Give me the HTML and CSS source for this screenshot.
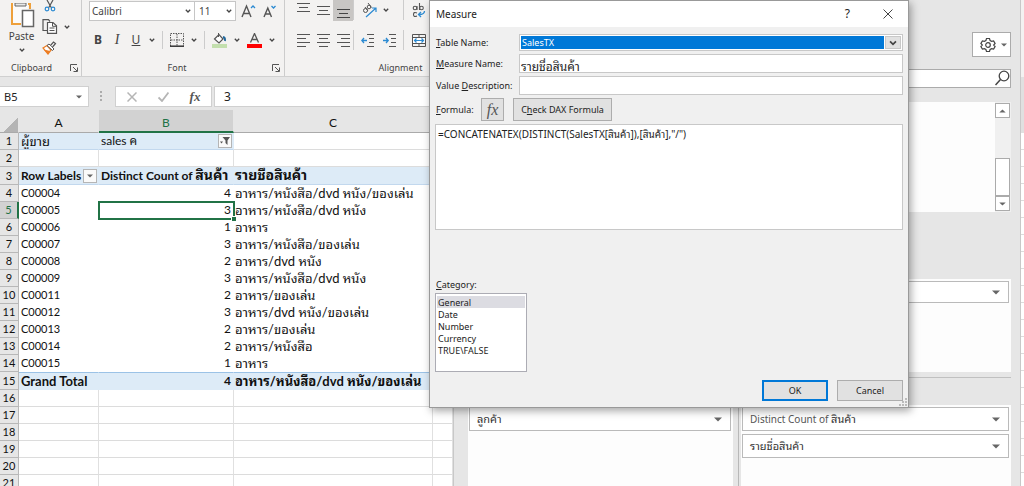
FILE: index.html
```html
<!DOCTYPE html>
<html lang="th">
<head>
<meta charset="utf-8">
<title>Measure</title>
<link rel="stylesheet" href="styles.css">
</head>
<body>
<svg class="defs" aria-hidden="true">
  <symbol id="chev" viewBox="0 0 6 6"><path d="M.8 1.800 3 4 5.200 1.800" fill="none" stroke="#444" stroke-width="1.300"/></symbol>
  <symbol id="tri" viewBox="0 0 8 5"><path d="M0 .5h8L4 4.500z" fill="#666"/></symbol>
  <symbol id="launch" viewBox="0 0 8 8"><path d="M.5 7V.5H7M3 3l4 4M7.500 3.500v4h-4" fill="none" stroke="#555"/></symbol>
</svg>
<div class="app">
  <main class="workbook">
    <div class="ribbon">
      <section class="group clipboard">
        <div class="tools">
          <button class="paste">
            <svg width="26" height="25" viewBox="0 0 26 25"><path d="M3 0v21h9M18 1h3v5" fill="none" stroke="#eea03b" stroke-width="2"/><path d="M4 0h15v7h-7v13H4z" fill="#fbfbfb"/><path d="M6 0h11v3H6z" fill="#e8e8e8" stroke="#666"/><path d="M13.500 7.500h11v16h-11z" fill="#fff" stroke="#666" stroke-width="1.500"/></svg>
            <span>Paste</span>
            <svg width="6" height="6"><use href="#chev"/></svg>
          </button>
          <div class="clips">
            <button aria-label="Cut"><svg width="12" height="12" viewBox="0 0 12 12"><path d="M3 0l4.500 8M9 0 4.500 8" fill="none" stroke="#555" stroke-width="1.200"/><circle cx="3" cy="9" r="1.800" fill="none" stroke="#2b8ad2" stroke-width="1.200"/><circle cx="9" cy="9" r="1.800" fill="none" stroke="#2b8ad2" stroke-width="1.200"/></svg></button>
            <button aria-label="Copy"><svg width="16" height="15" viewBox="0 0 16 15"><path d="M5 11.500H1V.700h5.500L8 2.500" fill="none" stroke="#555" stroke-width="1.200"/><path d="M5.500 3.500h5.500l3.500 3.300v7.500h-9z" fill="#fff" stroke="#555" stroke-width="1.200"/><path d="M10.500 3.500v3.800h4M7.500 9h5M7.500 11.500h5" fill="none" stroke="#555"/></svg><svg width="6" height="6"><use href="#chev"/></svg></button>
            <button aria-label="Format Painter"><svg width="15" height="14" viewBox="0 0 15 14"><path d="M1 7l4-2.500 4 4.500-3 4z" fill="#fff" stroke="#ed7d22" stroke-width="1.300"/><path d="M2 9l4 4 2-3-4-1z" fill="#ed7d22"/><path d="M5 4.500l2-1.500 5 5-1.500 1.500z" fill="#fff" stroke="#555"/><path d="M8.500 4.500l3-3.500 2 1.500-3 3.500" fill="#fff" stroke="#555" stroke-width="1.200"/></svg></button>
          </div>
        </div>
        <div class="caption"><span>Clipboard</span><svg width="8" height="8"><use href="#launch"/></svg></div>
      </section>
      <section class="group font">
        <div class="line">
          <span class="combo name"><select aria-label="Font"><option>Calibri</option></select><svg width="6" height="6"><use href="#chev"/></svg></span>
          <span class="combo size"><select aria-label="Font size"><option>11</option></select><svg width="6" height="6"><use href="#chev"/></svg></span>
          <button class="grow" aria-label="Increase font size"><svg width="15" height="14" viewBox="0 0 15 14"><path d="M1 13 5.500 2 10 13M2.500 9.500h6" fill="none" stroke="#555" stroke-width="1.400"/><path d="M10 4l2-2 2 2" fill="none" stroke="#2b8ad2" stroke-width="1.300"/></svg></button>
          <button aria-label="Decrease font size"><svg width="14" height="14" viewBox="0 0 14 14"><path d="M1 13 4.800 4 8.500 13M2.300 10h5" fill="none" stroke="#555" stroke-width="1.400"/><path d="M8.500 2l2 2 2-2" fill="none" stroke="#2b8ad2" stroke-width="1.300"/></svg></button>
        </div>
        <div class="line styles">
          <button class="b">B</button><button class="i">I</button><button class="u">U</button><svg width="6" height="6"><use href="#chev"/></svg>
          <i class="bar"></i>
          <button aria-label="Borders"><svg width="14" height="14" viewBox="0 0 14 14"><path d="M.5 13V.5h13V13M7 1v12M1 7h12" fill="none" stroke="#555" stroke-dasharray="1.500 1"/><path d="M0 13.200h14" stroke="#333" stroke-width="1.500"/></svg></button><svg width="6" height="6"><use href="#chev"/></svg>
          <i class="bar"></i>
          <button aria-label="Fill colour"><svg width="15" height="15" viewBox="0 0 15 15"><path d="M2.500 6 7 1.500l4 4.500-4 4z" fill="#fff" stroke="#555" stroke-width="1.200"/><path d="M6.500 0v4" stroke="#555"/><path d="M11 4q2.500.5 2 4" fill="none" stroke="#22689c" stroke-width="1.800"/><path d="M0 11h15v4H0z" fill="#c3dfae"/></svg></button><svg width="6" height="6"><use href="#chev"/></svg>
          <button aria-label="Font colour"><svg width="15" height="15" viewBox="0 0 15 15"><path d="M3.500 9.500 7.500.5l4 9M5 6.500h5" fill="none" stroke="#555" stroke-width="1.300"/><path d="M0 11h15v4H0z" fill="#f00"/></svg></button><svg width="6" height="6"><use href="#chev"/></svg>
        </div>
        <div class="caption"><span>Font</span><svg width="8" height="8"><use href="#launch"/></svg></div>
      </section>
      <section class="group align">
        <div class="cells">
          <button aria-label="Top align"><svg width="13" height="14" viewBox="0 0 13 14"><path d="M0 .5h13M2 4.500h9M0 8.500h13" stroke="#555"/></svg></button>
          <button aria-label="Middle align"><svg width="13" height="14" viewBox="0 0 13 14"><path d="M0 3.500h13M2 7.500h9M0 11.500h13" stroke="#555"/></svg></button>
          <button class="on" aria-label="Bottom align"><svg width="13" height="14" viewBox="0 0 13 14"><path d="M0 5.500h13M2 9.500h9M0 13.500h13" stroke="#444"/></svg></button>
          <button class="wide split" aria-label="Orientation"><svg width="16" height="15" viewBox="0 0 16 15"><g fill="none" stroke="#555"><circle cx="3.500" cy="7.500" r="2"/><path d="M3 4l3 4"/><circle cx="7" cy="4" r="1.800"/><path d="M6 0l3.500 4.500"/></g><path d="M4 14 14 5M10 5h4v4" fill="none" stroke="#2b8ad2" stroke-width="1.200"/></svg><svg width="6" height="6"><use href="#chev"/></svg></button>
          <button class="edge" aria-label="Wrap text"><svg width="14" height="15" viewBox="0 0 14 15"><g fill="none" stroke="#555" stroke-width="1.100"><circle cx="3" cy="5" r="1.800"/><path d="M5 3v4M7.500 0v7"/><circle cx="9.500" cy="5" r="1.800"/><path d="M5 10q-3.500-1.500-3.500 1.500T5 13"/></g><path d="M12.500 8q0 3.500-5.500 3.500M9 9l-2.500 2.500L9 14" fill="none" stroke="#2b8ad2" stroke-width="1.300"/></svg></button>
          <button aria-label="Align left"><svg width="13" height="13" viewBox="0 0 13 13"><path d="M0 .5h13M0 4.500h9M0 8.500h13M0 12.500h9" stroke="#555"/></svg></button>
          <button aria-label="Center"><svg width="13" height="13" viewBox="0 0 13 13"><path d="M0 .5h13M2 4.500h9M0 8.500h13M2 12.500h9" stroke="#555"/></svg></button>
          <button aria-label="Align right"><svg width="13" height="13" viewBox="0 0 13 13"><path d="M0 .5h13M4 4.500h9M0 8.500h13M4 12.500h9" stroke="#555"/></svg></button>
          <button class="split" aria-label="Decrease indent"><svg width="13" height="13" viewBox="0 0 13 13"><path d="M6 .5h7M8 4.500h5M8 8.500h5M6 12.500h7" stroke="#555"/><path d="M6 6.500H1M3 4 .8 6.500 3 9" fill="none" stroke="#2b8ad2" stroke-width="1.300"/></svg></button>
          <button class="indent" aria-label="Increase indent"><svg width="13" height="13" viewBox="0 0 13 13"><path d="M6 .5h7M8 4.500h5M8 8.500h5M6 12.500h7" stroke="#555"/><path d="M0 6.500h5M3 4l2.200 2.500L3 9" fill="none" stroke="#2b8ad2" stroke-width="1.300"/></svg></button>
          <button class="edge" aria-label="Merge"><svg width="14" height="13" viewBox="0 0 14 13"><path d="M.5.5h13v12H.5zM0 3.500h14M0 9.500h14M7 0v3.500M7 9.500V13" fill="none" stroke="#555"/><path d="M1 4h12v5H1z" fill="#fff"/><path d="M2.500 6.500h9M4.500 4.500l-2 2 2 2M9.500 4.500l2 2-2 2" fill="none" stroke="#2b8ad2" stroke-width="1.200"/></svg></button>
        </div>
        <div class="caption"><span>Alignment</span></div>
      </section>
    </div>
    <div class="formulabar">
      <label class="namebox"><input aria-label="Name box" value="B5"><svg width="6" height="4"><use href="#tri"/></svg></label>
      <svg class="grip" width="3" height="12" viewBox="0 0 3 12"><path d="M1 1v2M1 5v2M1 9v2" stroke="#999" stroke-width="1.500"/></svg>
      <div class="entry">
        <button aria-label="Cancel entry"><svg width="10" height="10" viewBox="0 0 10 10"><path d="M.5.5l9 9M9.500.5l-9 9" stroke="#b5b5b5" stroke-width="1.500"/></svg></button>
        <button aria-label="Enter"><svg width="11" height="10" viewBox="0 0 11 10"><path d="M.5 5.500 4 9l6.500-8.500" fill="none" stroke="#b5b5b5" stroke-width="1.800"/></svg></button>
        <button class="fx">fx</button>
      </div>
      <input class="content" aria-label="Formula bar" value="3">
    </div>
    <table class="sheet">
      <colgroup><col class="c0"><col class="ca"><col class="cb"><col class="cc"><col></colgroup>
      <thead><tr><th class="corner"></th><th>A</th><th class="sel">B</th><th>C</th><th></th></tr></thead>
      <tbody>
        <tr><th>1</th><td class="blue"><span class="seller">ผู้ขาย</span></td><td class="blue"><div class="with">sales ค<button class="drop" aria-label="Filter sales"><svg width="10" height="8" viewBox="0 0 10 8"><path d="M2.500 0H10L7.500 3.500V8L5.500 6V3.500z" fill="#555"/><path d="M0 4.500h3L1.500 6.500z" fill="#555"/></svg></button></div></td><td></td><td></td></tr>
        <tr><th>2</th><td></td><td></td><td></td><td></td></tr>
        <tr class="head"><th>3</th><td><div class="with">Row Labels<button class="drop" aria-label="Filter rows"><svg width="6" height="4"><use href="#tri"/></svg></button></div></td><td>Distinct Count of <span class="thai">สินค้า</span></td><td><span class="thai">รายชื่อสินค้า</span></td><td></td></tr>
        <tr class="data"><th>4</th><td>C00004</td><td>4</td><td>อาหาร/หนังสือ/dvd หนัง/ของเล่น</td><td></td></tr>
        <tr class="data"><th class="sel">5</th><td>C00005</td><td class="active">3</td><td>อาหาร/หนังสือ/dvd หนัง</td><td></td></tr>
        <tr class="data"><th>6</th><td>C00006</td><td>1</td><td>อาหาร</td><td></td></tr>
        <tr class="data"><th>7</th><td>C00007</td><td>3</td><td>อาหาร/หนังสือ/ของเล่น</td><td></td></tr>
        <tr class="data"><th>8</th><td>C00008</td><td>2</td><td>อาหาร/dvd หนัง</td><td></td></tr>
        <tr class="data"><th>9</th><td>C00009</td><td>3</td><td>อาหาร/หนังสือ/dvd หนัง</td><td></td></tr>
        <tr class="data"><th>10</th><td>C00011</td><td>2</td><td>อาหาร/ของเล่น</td><td></td></tr>
        <tr class="data"><th>11</th><td>C00012</td><td>3</td><td>อาหาร/dvd หนัง/ของเล่น</td><td></td></tr>
        <tr class="data"><th>12</th><td>C00013</td><td>2</td><td>อาหาร/ของเล่น</td><td></td></tr>
        <tr class="data"><th>13</th><td>C00014</td><td>2</td><td>อาหาร/หนังสือ</td><td></td></tr>
        <tr class="data"><th>14</th><td>C00015</td><td>1</td><td>อาหาร</td><td></td></tr>
        <tr class="data total"><th>15</th><td>Grand Total</td><td>4</td><td>อาหาร/หนังสือ/dvd หนัง/ของเล่น</td><td></td></tr>
        <tr><th>16</th><td></td><td></td><td></td><td></td></tr>
        <tr><th>17</th><td></td><td></td><td></td><td></td></tr>
        <tr><th>18</th><td></td><td></td><td></td><td></td></tr>
        <tr><th>19</th><td></td><td></td><td></td><td></td></tr>
        <tr><th>20</th><td></td><td></td><td></td><td></td></tr>
        <tr><th>21</th><td></td><td></td><td></td><td></td></tr>
      </tbody>
    </table>
  </main>
  <aside class="pane">
    <button class="gear" aria-label="Tools"><svg width="16" height="16" viewBox="0 0 16 16"><path d="M6.500 1.500h3l.6 2 1.500.8 2-.4 1.500 2.600L13.700 8l1.400 1.500-1.500 2.600-2-.4-1.500.8-.6 2h-3l-.6-2-1.500-.8-2 .4L.9 9.500 2.300 8 .9 6.500l1.500-2.600 2 .4 1.500-.8z" fill="none" stroke="#444" stroke-width="1.200"/><circle cx="8" cy="8" r="2.300" fill="none" stroke="#444" stroke-width="1.200"/></svg><svg width="6" height="4"><use href="#tri"/></svg></button>
    <label class="search"><input aria-label="Search fields"><svg width="15" height="16" viewBox="0 0 15 16"><circle cx="9" cy="6" r="4.800" fill="none" stroke="#444" stroke-width="1.300"/><path d="M5.500 9.500.5 15" stroke="#444" stroke-width="1.500"/></svg></label>
    <div class="fields"><div class="scroll"><button aria-label="Scroll up"><svg class="up" width="7" height="4"><use href="#tri"/></svg></button><i class="thumb"></i><button aria-label="Scroll down"><svg width="7" height="4"><use href="#tri"/></svg></button></div></div>
    <div class="zones upper"><div class="zone"></div><div class="zone"><button class="item"><span></span><svg width="8" height="5"><use href="#tri"/></svg></button></div></div>
    <div class="zones lower"><div class="zone"><button class="item"><span class="thai">ลูกค้า</span><svg width="8" height="5"><use href="#tri"/></svg></button></div><div class="zone"><button class="item"><span>Distinct Count of <span class="thai">สินค้า</span></span><svg width="8" height="5"><use href="#tri"/></svg></button><button class="item"><span class="thai">รายชื่อสินค้า</span><svg width="8" height="5"><use href="#tri"/></svg></button></div></div>
  </aside>
  <div class="sliver"><i class="rib"></i><i class="fill"></i><i class="rows"></i></div>
</div>

<section class="dialog" role="dialog" aria-labelledby="dlg-title">
  <header><h1 id="dlg-title">Measure</h1><button aria-label="Help">?</button><button aria-label="Close"><svg width="10" height="10" viewBox="0 0 10 10"><path d="M.5.5l9 9M9.500.5l-9 9" stroke="#444"/></svg></button></header>
  <form>
    <div class="row"><label for="tbl"><u>T</u>able Name:</label><span class="picker"><select id="tbl"><option>SalesTX</option></select><span class="arrow"><svg width="8" height="8"><use href="#chev"/></svg></span></span></div>
    <div class="row"><label for="mn"><u>M</u>easure Name:</label><input id="mn" value="รายชื่อสินค้า"></div>
    <div class="row"><label for="vd">Value <u>D</u>escription:</label><input id="vd"></div>
    <div class="formula"><label for="fm"><u>F</u>ormula:</label><button type="button" class="fx">fx</button><button type="button" class="check"><span>C<u>h</u>eck DAX Formula</span></button></div>
    <textarea id="fm" spellcheck="false">=CONCATENATEX(DISTINCT(SalesTX[สินค้า]),[สินค้า],"/")</textarea>
    <label class="catlabel" for="cat"><u>C</u>ategory:</label>
    <select id="cat" size="6"><option selected>General</option><option>Date</option><option>Number</option><option>Currency</option><option>TRUE\FALSE</option></select>
    <div class="actions"><button type="button" class="ok">OK</button><button type="button">Cancel</button></div>
  </form>
  <svg class="sizer" width="8" height="8" viewBox="0 0 8 8"><path d="M6 0h2v2H6zM3 3h2v2H3zM6 3h2v2H6zM0 6h2v2H0zM3 6h2v2H3zM6 6h2v2H6z" fill="#bbb"/></svg>
</section>
</body>
</html>
```
FILE: styles.css
```css
* { box-sizing: border-box; }
body { margin: 0; height: 100vh; overflow: hidden; position: relative; background: #e6e6e6; color: #222; font: 10px/14px "Noto Sans", "Noto Sans Thai Looped", Loma, Waree, "Noto Sans Thai", sans-serif; }
button, input, select, textarea { font: inherit; color: inherit; margin: 0; padding: 0; border: 0; background: none; border-radius: 0; outline: 0; }
button { display: inline-flex; align-items: center; justify-content: center; white-space: nowrap; }
select { appearance: none; }
svg { display: block; flex: none; }
.defs { position: absolute; width: 0; height: 0; }

.app { display: grid; grid-template-columns: minmax(0, 453fr) minmax(0, 568fr) 3px; height: 100%; }
.workbook { overflow: hidden; }

.ribbon { display: flex; height: 77px; background: #f3f2f1; border-bottom: 1px solid #d0d0d0; color: #444; overflow: hidden; }
.group { display: flex; flex-direction: column; flex: none; padding-bottom: 1px; }
.group .caption { display: flex; align-items: center; justify-content: space-between; margin-top: auto; font-size: 9px; }
.caption span { flex: 1; padding-right: 7px; text-align: center; }
.clipboard { width: 82px; padding-right: 3px; border-right: 1px solid #ccc; }
.clipboard .tools { display: flex; gap: 4px; }
.paste { flex-direction: column; gap: 1px; width: 38px; padding-left: 5px; }
.paste > svg:last-child { margin-top: 3px; }
.clips { display: flex; flex-direction: column; gap: 7px; align-items: flex-start; }
.clips button { gap: 6px; }
.clips button:first-child { padding-left: 2px; }
.font { width: 203px; padding: 1px 4px 1px 7px; border-right: 1px solid #ccc; }
.line { display: flex; align-items: center; }
.combo { display: flex; align-items: center; height: 20px; padding: 0 3px 0 2px; border: 1px solid #c6c6c6; background: #fff; }
.combo select { flex: 1; min-width: 0; }
.combo.name { width: 106px; }
.combo.size { width: 41px; border-left: 0; padding-left: 4px; }
.grow { margin: 0 7px 0 5px; }
.styles { height: 20px; margin-top: 9px; justify-content: space-between; padding: 0 5px 0 3px; }
.styles button { min-width: 12px; font-size: 12px; }
.styles .b { font-weight: 700; }
.styles .i { font-family: "Liberation Serif", serif; font-style: italic; font-size: 14px; }
.styles .u { text-decoration: underline; }
.bar { width: 1px; height: 18px; background: #ccc; }
.align { flex: 1 0 170px; }
.align .cells { display: grid; grid-template-columns: repeat(3, 20px) 28px 22px 30px; row-gap: 9px; padding-left: 8px; }
.cells button { height: 20px; }
.cells .on { background: #c8c6c4; height: 21px; }
.cells .wide { grid-column: span 2; gap: 5px; justify-content: flex-start; padding-left: 8px; }
.cells .split, .cells .edge { border-left: 1px solid #ccc; }
.cells .indent { justify-content: flex-start; padding-left: 2px; }
.align .caption { padding-left: 68px; }

.formulabar { display: flex; height: 33px; padding: 9px 0 3px; }
.namebox { display: flex; align-items: center; width: 89px; padding: 0 6px 0 4px; background: #fff; border: 1px solid #d0d0d0; border-left: 0; }
.namebox input { flex: 1; min-width: 0; font-size: 11px; }
.grip { margin: 4px 12px 0 11px; }
.entry { display: flex; align-items: center; justify-content: space-around; width: 97px; margin-right: 2px; border: 1px solid #d0d0d0; background: #fff; }
.fx { font: italic 700 13px/16px "Liberation Serif", serif; color: #555; }
.content { flex: 1; min-width: 0; padding-left: 9px; border: 1px solid #d0d0d0; border-right: 0; background: #fff; font-size: 12px; }

.sheet { width: 100%; table-layout: fixed; border-collapse: separate; border-spacing: 0; background: #fff; color: #111; font: 12px/16px Lato, "Noto Sans Thai Looped", Loma, Waree, "Noto Sans Thai", sans-serif; }
.c0 { width: 19px; } .ca { width: 80px; } .cb { width: 135px; } .cc { width: 199px; }
.sheet th, .sheet td { height: 17px; padding: 0 2px; border-right: 1px solid #e0e0e0; border-bottom: 1px solid #dcdcdc; overflow: hidden; white-space: nowrap; }
.sheet td { text-align: left; line-height: 14px; }
.sheet td:nth-child(4) { padding-left: 1px; }
.sheet th { padding: 0; background: #e6e6e6; border-color: #b8b8b8; font-weight: 400; }
.sheet tbody th { font-size: 11px; }
.sheet thead th { height: 23px; padding-top: 4px; border-right-color: #e6e6e6; border-bottom-color: #aaa; }
.sheet .corner { background: linear-gradient(135deg, #e6e6e6 65%, #b4b4b4 65%); }
.sheet th.sel { background: #d2d2d2; color: #217346; }
.sheet thead .sel { border-bottom: 2px solid #217346; }
.sheet tbody .sel { border-right: 2px solid #217346; }
.sheet .blue, .sheet .head td, .sheet .total td { background: #ddebf7; border-right-color: #ddebf7; border-bottom-color: #c2d8ee; }
.sheet .head td, .sheet .total td { height: 18px; font-weight: 700; }
.sheet .total td { border-top: 1px solid #9bc2e6; border-bottom-color: #ddebf7; }
.sheet .data td { border-right-color: transparent; }
.sheet .data:not(.total) td { border-bottom-color: transparent; }
.data td:nth-child(2) { font-size: 11px; }
.data td:nth-child(3) { text-align: right; }
.data td:nth-child(4), .total td:nth-child(2) { font-size: 13px; }
.sheet .thai { font-size: 14px; }
.sheet .seller { font-size: 13px; }
.with { display: flex; align-items: center; justify-content: space-between; }
.drop { width: 14px; height: 14px; margin-right: -1px; border: 1px solid #b5b5b5; background: #fafafa; }
.sheet td.active { position: relative; overflow: visible; outline: 2px solid #217346; outline-offset: -1px; }
.active::after { content: ""; position: absolute; right: -3px; bottom: -3px; width: 4px; height: 4px; background: #217346; outline: 1px solid #fff; }

.pane { display: flex; flex-direction: column; padding: 32px 9px 0 14px; border-left: 1px solid #c8c8c8; border-right: 1px solid #c8c8c8; background: #e6e6e6; }
.gear { align-self: flex-end; gap: 5px; width: 39px; height: 25px; padding-left: 3px; border: 1px solid #ababab; background: #fff; }
.search { display: flex; height: 19px; margin-top: 12px; border: 1px solid #ababab; background: #fff; }
.search input { flex: 1; min-width: 0; }
.fields { display: flex; justify-content: flex-end; height: 110px; margin-top: 14px; background: #fdfdfd; }
.scroll { display: flex; flex-direction: column; width: 16px; padding: 1px 1px 1px 0; background: #f0f0f0; }
.scroll button { height: 15px; border: 1px solid #ababab; background: #fff; }
.scroll .up { transform: scaleY(-1); }
.thumb { height: 38px; margin-top: auto; border: 1px solid #ababab; background: #fff; }
.zones { display: grid; grid-template-columns: 266fr 271fr; gap: 8px; }
.zone { display: flex; flex-direction: column; gap: 3px; padding: 2px 2px 0 1px; background: #fdfdfd; }
.upper { height: 93px; margin-top: 67px; }
.lower { flex: 1; margin-top: 5px; padding-top: 27px; border-top: 1px solid #c0c0c0; background: linear-gradient(#b8b8b8, #b8b8b8) 270px 0 / 1px 100% no-repeat; }
.item { justify-content: space-between; height: 24px; padding: 0 8px 0 7px; border: 1px solid #bababa; background: #fff; color: #555; }
.item .thai { font-size: 11px; color: #333; }
.upper .item { height: 22px; }

.sliver { display: flex; flex-direction: column; background: #fff; }
.sliver .rib { height: 77px; background: #f3f2f1; }
.sliver .fill { height: 56px; background: #e0e0e0; }
.sliver .rows { flex: 1; background: repeating-linear-gradient(#fff 0 16px, #dcdcdc 16px 17px); }

.dialog { position: absolute; top: 0; left: 429px; width: 480px; border: 1px solid #999; background: #f0f0f0; box-shadow: 2px 3px 8px rgba(0, 0, 0, .35); font-size: 9px; }
.dialog header { display: flex; align-items: center; height: 26px; padding: 0 15px 0 6px; background: #fff; }
.dialog h1 { flex: 1; margin: 0; font-size: 10px; font-weight: 400; }
.dialog header button { margin-left: 33px; font-size: 12px; }
.dialog form { display: flex; flex-direction: column; padding: 7px 5px 6px 5px; }
.row { display: grid; grid-template-columns: 83px 1fr; align-items: center; margin-bottom: 3px; padding-left: 1px; white-space: nowrap; }
.row input { height: 19px; padding: 4px 1px 0; border: 1px solid #c8c8c8; background: #fff; font-size: 12px; line-height: 14px; }
.picker { display: flex; height: 17px; padding: 1px; border: 1px solid #c8c8c8; background: #fff; }
.picker select { flex: 1; padding-left: 1px; background: #0078d7; color: #fff; font-size: 9px; line-height: 12px; }
.arrow { display: grid; place-items: center; width: 16px; margin-left: 1px; border: 1px solid #c8c8c8; background: #e1e1e1; }
.formula { display: flex; align-items: center; height: 23px; padding-left: 1px; }
.formula label { width: 45px; }
.formula button, .actions button { border: 1px solid #adadad; background: #e1e1e1; }
.formula .fx { width: 23px; height: 23px; margin-right: 9px; font-weight: 400; font-size: 16px; }
.check { width: 99px; height: 23px; }
textarea { display: block; height: 106px; margin-top: 3px; padding: 2px; border: 1px solid #c8c8c8; background: #fff; font-size: 10px; resize: none; }
.catlabel { margin-top: 48px; padding-left: 1px; }
#cat { width: 92px; height: 79px; margin-top: 1px; padding: 2px 1px; border: 1px solid #acacb4; background: #fff; overflow: hidden; }
#cat option { min-height: 12px; height: 12px; padding: 0 1px; line-height: 12px; }
#cat option:checked { background: #dcdce2 linear-gradient(#dcdce2, #dcdce2); color: #222; }
.actions { display: flex; justify-content: flex-end; gap: 9px; margin-top: 8px; }
.actions button { width: 66px; height: 21px; }
.actions .ok { border: 2px solid #0078d7; }
.sizer { position: absolute; right: 1px; bottom: 1px; }
```
